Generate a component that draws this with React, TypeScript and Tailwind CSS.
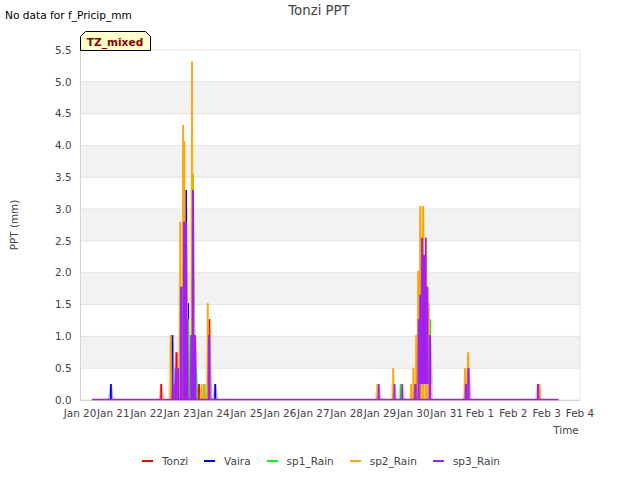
type Spike = [number, number, number?, number?];

const Y = (v: number) => 400 - v * 63.64;

const series: { name: string; color: string; spikes: Spike[] }[] = [
  {
    name: "Tonzi",
    color: "#ff0000",
    spikes: [[160.3, 0.25, 1.8], [175.5, 0.75, 2], [198, 0.25, 2], [208.8, 1.27, 1.5], [421.8, 0.5, 1.8, 0.25]],
  },
  {
    name: "Vaira",
    color: "#0000ff",
    spikes: [[110, 0.25, 1.8], [171.5, 1.02, 1.8], [185.5, 3.3, 1.5], [188, 1.52, 1], [194.5, 1.02, 1.5], [214.3, 0.25, 1.8]],
  },
  {
    name: "sp1_Rain",
    color: "#00ff00",
    spikes: [[182.3, 0.25, 1.3], [187.8, 1.27, 1.2], [192.5, 3.55, 1.5], [196, 0.5, 1], [204, 0.25, 1.5], [399.8, 0.25, 1.8], [429.8, 1.27, 1.2, 0.25]],
  },
  {
    name: "sp2_Rain",
    color: "#ffa500",
    spikes: [
      [169.8, 1.02, 1.8], [176.5, 0.5, 1.2], [179.3, 2.8, 1.8], [182.2, 4.32, 1.8], [183.3, 4.07, 1.8], [191.1, 5.32, 1.8],
      [192.5, 3.55, 1.2], [201, 0.25, 1.5], [203, 0.25, 1.5], [206.9, 1.52, 1.8],
      [376.5, 0.25, 1.8], [392.3, 0.5, 1.8], [410.3, 0.25, 1.8], [412.5, 0.5, 1.8], [415.3, 1.02, 1.8], [417.3, 2.03, 2.8],
      [419.3, 3.05, 2], [422.1, 3.05, 2], [425.1, 2.55, 2], [428.3, 1.52, 1.4],
      [464.1, 0.5, 2.2], [467.1, 0.75, 2], [539.2, 0.25, 1.4],
    ],
  },
  {
    name: "sp3_Rain",
    color: "#a020f0",
    spikes: [
      [172.3, 0.25, 2.2], [174.8, 0.5, 2.4], [177.3, 0.5, 1.8], [180.1, 1.78, 2.4], [183, 2.8, 4], [186.5, 1.27, 1.4], [190.3, 1.02, 1.8],
      [192, 3.3, 2], [194.1, 1.02, 1.8], [208.1, 1.02, 1.9],
      [378, 0.25, 1.7], [393.7, 0.25, 1.7], [401.4, 0.25, 1.7], [414.3, 0.25, 2.2], [417.8, 1.27, 1.8], [419.3, 1.65, 1.8, 0.25],
      [421.1, 2.55, 2, 0.25], [423, 2.28, 2, 0.25], [425, 2.55, 1.4, 0.25], [426.3, 1.78, 2, 0.25], [429, 1.02, 2],
      [465, 0.25, 2], [467.4, 0.5, 2.2], [537, 0.25, 2],
    ],
  },
];

const yTicks = ["0.0", "0.5", "1.0", "1.5", "2.0", "2.5", "3.0", "3.5", "4.0", "4.5", "5.0", "5.5"];
const xTicks = ["Jan 20", "Jan 21", "Jan 22", "Jan 23", "Jan 24", "Jan 25", "Jan 26", "Jan 27", "Jan 28", "Jan 29", "Jan 30", "Jan 31", "Feb 1", "Feb 2", "Feb 3", "Feb 4"];
const font = '"DejaVu Sans", sans-serif';

export default function App() {
  return (
    <div className="flex h-[480px] w-[640px] flex-col bg-white font-['DejaVu_Sans',sans-serif] text-[#444444]">
      <div className="grid h-[30px] grid-cols-[1fr_auto_1fr] items-start pl-[5px]">
        <div className="pt-[8px] text-[10.6px] leading-[14px] text-black">No data for f_Pricip_mm</div>
        <div className="pr-[7px] pt-[3px] text-[13.3px] leading-[16px]">Tonzi PPT</div>
        <div />
      </div>
      <svg viewBox="0 30 640 410" className="block h-[410px] w-[640px]" style={{ fontFamily: font }}>
        {[4.5, 3.5, 2.5, 1.5, 0.5].map((v) => (
          <rect key={v} x={80.5} y={Y(v + 0.5)} width={499.5} height={31.82} fill="#f2f2f2" />
        ))}
        {yTicks.map((t, i) => (
          <line key={t} x1={80} x2={580} y1={Y(i * 0.5)} y2={Y(i * 0.5)} stroke="#e3e3e3" strokeWidth={1} />
        ))}
        <line x1={580} x2={580} y1={50} y2={400} stroke="#e3e3e3" />
        <line x1={80.5} x2={80.5} y1={50} y2={400.5} stroke="#d4d4d4" />
        <line x1={80} x2={580} y1={400.5} y2={400.5} stroke="#d4d4d4" />

        {series.map((s) => (
          <g key={s.name}>
            {s.spikes.map(([x, v, w = 1.5, floor = 0], i) => (
              <g key={i}>
                <path
                  d={`M${x - 2} ${Y(floor)} L${x} ${Y(v)} H${x + w} L${x + w + 2} ${Y(floor)} Z`}
                  fill={s.color}
                  opacity={0.3}
                />
                <rect x={x} y={Y(v)} width={w} height={Y(floor) - Y(v)} fill={s.color} />
              </g>
            ))}
          </g>
        ))}
        <line x1={92} x2={558.5} y1={399.4} y2={399.4} stroke="#a020f0" strokeWidth={1.5} />

        {yTicks.map((t, i) => (
          <text key={t} x={71.5} y={Y(i * 0.5) + 3.7} textAnchor="end" fontSize={10.4} fill="#444444">
            {t}
          </text>
        ))}
        {xTicks.map((t, i) => (
          <text key={t} x={80 + i * 33.33} y={417} textAnchor="middle" fontSize={10.4} fill="#444444">
            {t}
          </text>
        ))}
        <text x={566} y={433.5} textAnchor="middle" fontSize={10.4} fill="#444444">
          Time
        </text>
        <text transform="translate(18 225) rotate(-90)" textAnchor="middle" fontSize={10.4} fill="#444444">
          PPT (mm)
        </text>

        <polygon points="80.5,50.5 80.5,36.5 85.5,31.5 145.5,31.5 150.5,36.5 150.5,50.5" fill="#ffffcc" stroke="#000000" />
        <text x={115} y={46} textAnchor="middle" fontSize={10.6} fontWeight={700} fill="#8b0000">
          TZ_mixed
        </text>
      </svg>
      <div className="flex h-[40px] items-start justify-center gap-[16px] pl-[2px] pt-[14px] text-[10.5px] leading-[14px]">
        {series.map((s) => (
          <div key={s.name} className="flex items-center gap-[9px]">
            <span className="h-[2px] w-[11px]" style={{ backgroundColor: s.color }} />
            <span>{s.name}</span>
          </div>
        ))}
      </div>
    </div>
  );
}
